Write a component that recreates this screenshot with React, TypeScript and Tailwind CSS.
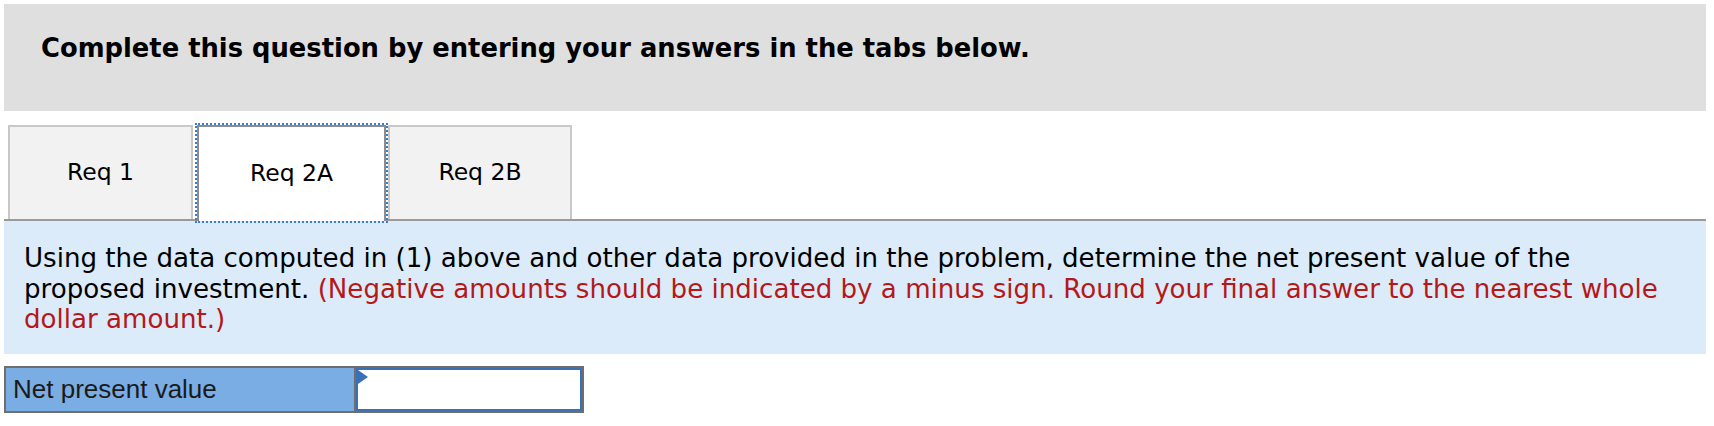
import React from "react";

export default function App() {
  const verdana = { fontFamily: '"DejaVu Sans", Verdana, sans-serif' };
  return (
    <div className="w-[1714px] h-[426px] bg-white pt-[4px] pl-[4px] pr-[8px] overflow-hidden">
      <div className="h-[107px] bg-[#dfdfdf] pl-[37px] pt-[29px]">
        <h2 className="text-[25.8px] leading-[30px] font-bold text-black" style={verdana}>
          Complete this question by entering your answers in the tabs below.
        </h2>
      </div>

      <div className="mt-[14px] flex items-start h-[96px] border-b-2 border-[#9a9a9a] pl-[4px]" style={verdana}>
        <div className="w-[185px] h-[94px] bg-[#f2f2f2] border-2 border-b-0 border-[#c8c8c8] flex items-center justify-center text-[23.5px] text-black">
          Req 1
        </div>
        <div className="relative z-10 ml-[4px] w-[189px] h-[96px] bg-white border-2 border-b-0 border-[#8c8c8c] flex items-center justify-center text-[23.5px] text-black outline-2 outline-dotted outline-[#3d7dcc]">
          Req 2A
        </div>
        <div className="ml-[2px] w-[184px] h-[94px] bg-[#f2f2f2] border-2 border-b-0 border-[#c8c8c8] flex items-center justify-center text-[23.5px] text-black">
          Req 2B
        </div>
      </div>

      <div className="bg-[#dcebf9] pl-[20px] pr-[34px] pt-[22px] pb-[19.5px] text-[26.1px] leading-[30.5px] text-black" style={verdana}>
        Using the data computed in (1) above and other data provided in the problem, determine the net present value of the proposed investment.{" "}
        <span className="text-[#b41818]">
          (Negative amounts should be indicated by a minus sign. Round your final answer to the nearest whole dollar amount.)
        </span>
      </div>

      <div className="mt-[12px] flex w-[580px] h-[47px] border-2 border-[#6e6e6e]">
        <div
          className="w-[350px] bg-[#7aade3] border-r-2 border-[#6e6e6e] flex items-center pl-[7px] text-[26px] text-[#1a1a1a]"
          style={{ fontFamily: '"Liberation Sans", Arial, sans-serif' }}
        >
          Net present value
        </div>
        <div className="relative flex-1 bg-white border-2 border-[#3a70b5]">
          <svg className="absolute left-0 top-0" width="10" height="14" viewBox="0 0 10 14">
            <polygon points="0,0 10,7 0,14" fill="#3a70b5" />
          </svg>
        </div>
      </div>
    </div>
  );
}
